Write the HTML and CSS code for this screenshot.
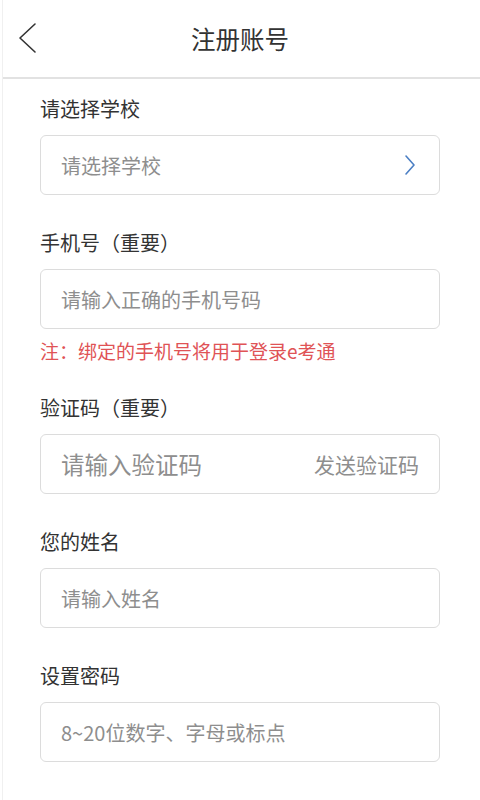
FILE: index.html
```html
<!DOCTYPE html>
<html lang="zh-CN">
<head>
    <meta charset="UTF-8">
    <meta name="viewport" content="width=device-width, initial-scale=1.0">
    <title>注册账号</title>
    <link rel="stylesheet" href="styles.css">
</head>
<body>
    <div class="page">
        <div class="topBar">
            <span class="backBtn">
                <svg width="20" height="32" viewBox="0 0 20 32">
                    <path d="M18 2 L3 16 L18 30" fill="none" stroke="#333" stroke-width="1.6" stroke-linecap="round" stroke-linejoin="round"/>
                </svg>
            </span>
            <p class="topTitle">注册账号</p>
        </div>

        <div class="formWrap">
            <div class="field">
                <p class="fieldLabel">请选择学校</p>
                <div class="fieldBox">
                    <span class="holder">请选择学校</span>
                    <svg class="arrowRight" width="12" height="22" viewBox="0 0 12 22">
                        <path d="M2 2 L10 11 L2 20" fill="none" stroke="#4b7fc4" stroke-width="1.6" stroke-linecap="round" stroke-linejoin="round"/>
                    </svg>
                </div>
            </div>

            <div class="field">
                <p class="fieldLabel">手机号（重要）</p>
                <div class="fieldBox">
                    <span class="holder">请输入正确的手机号码</span>
                </div>
                <p class="note">注：绑定的手机号将用于登录e考通</p>
            </div>

            <div class="field">
                <p class="fieldLabel">验证码（重要）</p>
                <div class="fieldBox">
                    <span class="holder holderBig">请输入验证码</span>
                    <span class="sendCode">发送验证码</span>
                </div>
            </div>

            <div class="field">
                <p class="fieldLabel">您的姓名</p>
                <div class="fieldBox">
                    <span class="holder">请输入姓名</span>
                </div>
            </div>

            <div class="field">
                <p class="fieldLabel">设置密码</p>
                <div class="fieldBox">
                    <span class="holder">8~20位数字、字母或标点</span>
                </div>
            </div>

            <div class="field">
                <p class="fieldLabel">确认密码</p>
                <div class="fieldBox">
                    <span class="holder">请再次输入密码</span>
                </div>
            </div>
        </div>
    </div>
</body>
</html>
```

FILE: styles.css
```css
*{
    padding: 0px;
    margin: 0px;
    box-sizing: border-box;
}
body{
    width: 100%;
    background-color: #fff;
    font-family: "Noto Sans CJK SC", "Noto Sans", sans-serif;
    color: #333;
}
.page{
    border-left: 1px solid #f0f0f0;
    margin-left: 2px;
    min-height: 800px;
}
.topBar{
    height: 79px;
    border-bottom: 2px solid #e2e2e2;
    display: flex;
    align-items: center;
    justify-content: center;
    position: relative;
}
.backBtn{
    position: absolute;
    left: 14px;
    top: 22px;
    display: flex;
}
.topTitle{
    font-size: 24.5px;
    line-height: 30px;
    color: #333;
    margin-left: -3px;
}
.formWrap{
    padding: 16px 40px 0 37px;
}
.field{
    margin-bottom: 34px;
}
.fieldLabel{
    font-size: 20px;
    line-height: 28px;
    color: #333;
    margin-bottom: 12px;
}
.fieldBox{
    height: 60px;
    border: 1.5px solid #dcdcdc;
    border-radius: 6px;
    display: flex;
    align-items: center;
    justify-content: space-between;
    padding: 0 20px 0 20px;
}
.holder{
    font-size: 20px;
    color: #8e8e8e;
}
.holderBig{
    font-size: 23.5px;
}
.sendCode{
    font-size: 21px;
    color: #8e8e8e;
}
.arrowRight{
    margin-right: 3px;
}
.note{
    font-size: 19px;
    line-height: 28px;
    color: #e05356;
    margin-top: 8px;
    margin-bottom: -5px;
}
```
